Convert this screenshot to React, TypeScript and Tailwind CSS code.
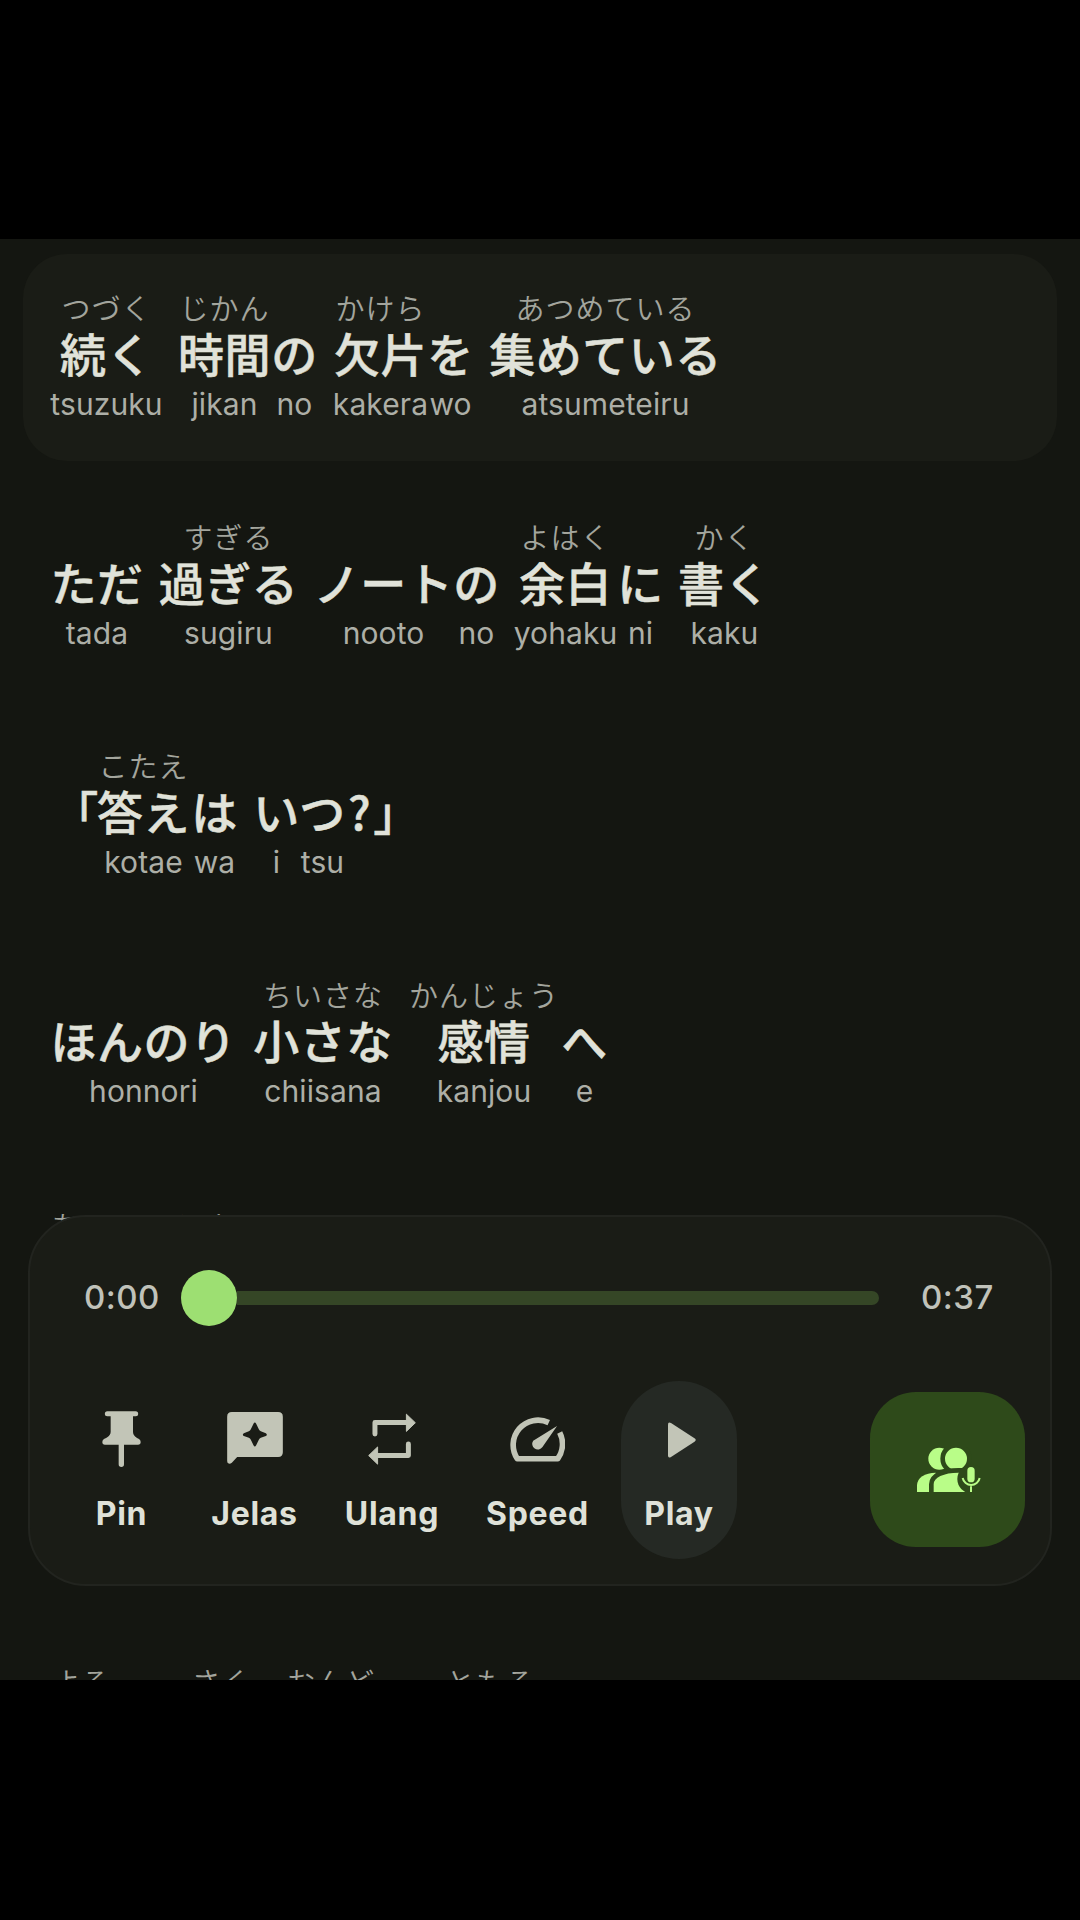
import type { ReactNode } from "react";

type Token = {
  text?: string;
  furigana?: string;
  romaji?: string;
  box: string;
};

type LyricLine = {
  id: number;
  active?: boolean;
  tokens: Token[];
};

const LINES: LyricLine[] = [
  {
    id: 1,
    active: true,
    tokens: [
      { text: "続く", furigana: "つづく", romaji: "tsuzuku", box: "w-[112px]" },
      { text: "時間", furigana: "じかん", romaji: "jikan", box: "ml-4 w-[92px]" },
      { text: "の", romaji: "no", box: "ml-px w-[46px]" },
      { text: "欠片", furigana: "かけら", romaji: "kakera", box: "ml-[17px] w-[92px]" },
      { text: "を", romaji: "wo", box: "ml-px w-[46px]" },
      { text: "集めている", furigana: "あつめている", romaji: "atsumeteiru", box: "ml-[17px] w-[230px]" },
    ],
  },
  {
    id: 2,
    tokens: [
      { text: "ただ", romaji: "tada", box: "w-[93px]" },
      { text: "過ぎる", furigana: "すぎる", romaji: "sugiru", box: "ml-4 w-[138px]" },
      { text: "ノート", romaji: "nooto", box: "ml-[17px] w-[138px]" },
      { text: "の", romaji: "no", box: "ml-px w-[46px]" },
      { text: "余白", furigana: "よはく", romaji: "yohaku", box: "ml-4 w-[100px]" },
      { text: "に", romaji: "ni", box: "ml-0.5 w-[46px]" },
      { text: "書く", furigana: "かく", romaji: "kaku", box: "ml-[15px] w-[92px]" },
    ],
  },
  {
    id: 3,
    tokens: [
      { text: "「", box: "ml-0.5 w-[46px]" },
      { text: "答え", furigana: "こたえ", romaji: "kotae", box: "-ml-px w-[92px]" },
      { text: "は", romaji: "wa", box: "ml-0.5 w-[46px]" },
      { text: "い", romaji: "i", box: "ml-4 w-[46px]" },
      { text: "つ", romaji: "tsu", box: "w-[46px]" },
      { text: "?", box: "w-[28px]" },
      { text: "」", box: "w-[46px]" },
    ],
  },
  {
    id: 4,
    tokens: [
      { text: "ほんのり", romaji: "honnori", box: "w-[186px]" },
      { text: "小さな", furigana: "ちいさな", romaji: "chiisana", box: "ml-[18px] w-[137px]" },
      { text: "感情", furigana: "かんじょう", romaji: "kanjou", box: "ml-[17px] w-[151px]" },
      { text: "へ", romaji: "e", box: "ml-0.5 w-[46px]" },
    ],
  },
  {
    id: 5,
    tokens: [
      { furigana: "あい", box: "mt-0.5 w-[60px]" },
      { furigana: "とき", box: "mt-0.5 ml-[64px] w-[58px]" },
    ],
  },
  { id: 6, tokens: [] },
  {
    id: 7,
    tokens: [
      { furigana: "よる", box: "w-[62px]" },
      { furigana: "さく", box: "ml-[63px] w-[92px]" },
      { furigana: "おんど", box: "ml-[17px] w-[92px]" },
      { furigana: "ともる", box: "ml-[68px] w-[92px]" },
    ],
  },
];

function LyricToken({ token }: { token: Token }) {
  return (
    <div className={`flex shrink-0 flex-col items-center whitespace-nowrap ${token.box}`}>
      <span className="ml-px h-[37px] font-['Noto_Sans_CJK_JP',sans-serif] text-[29px] leading-[37px] font-[350] tracking-[1px] text-[#a3a59d]">
        {token.furigana}
      </span>
      <span className="ml-px h-[53px] font-['Noto_Sans_CJK_JP',sans-serif] text-[46px] leading-[53px] font-medium tracking-[0.5px] text-[#e0e2d9] [-webkit-text-stroke:0.5px_#e0e2d9]">
        {token.text}
      </span>
      <span className="mt-[5px] ml-px h-10 font-[Inter,sans-serif] text-[30px] leading-10 tracking-[0.1px] text-[#adafa7]">
        {token.romaji}
      </span>
    </div>
  );
}

function PinIcon() {
  return (
    <svg width="39" height="56" viewBox="0 0 117 168" fill="currentColor">
      <path d="M16 1H101a7.500 7.500 0 0 1 0 15H93V62C93 74 104 80 111 84Q116 87 116 93Q116 101 108 101H66V160a8 8 0 0 1-16 0V101H9Q1 101 1 93Q1 87 6 84C14 80 26 74 26 62V16H16a7.500 7.500 0 0 1 0-15Z" />
    </svg>
  );
}

function ExplainIcon() {
  return (
    <svg width="56" height="52" viewBox="0 0 167 156" className="mb-0.5" fill="currentColor">
      <path
        fillRule="evenodd"
        d="M14 0H153Q167 0 167 14V121Q167 135 153 135H30L14 152Q8 157 3 154Q0 152 0 146V14Q0 0 14 0ZM79 35Q83 28 87 35L95 52Q97 56 101 58L116 64Q122 68 116 72L101 77Q97 79 95 83L87 100Q83 107 79 100L71 83Q69 79 65 77L50 72Q44 68 50 64L65 58Q69 56 71 52Z"
      />
    </svg>
  );
}

function RepeatIcon() {
  return (
    <svg width="48" height="52" viewBox="0 0 145 156" fill="none" stroke="currentColor">
      <path
        d="M21 63V28H118M122 93V128H28"
        strokeWidth="15"
        strokeLinecap="round"
        strokeLinejoin="round"
      />
      <path
        d="M116 3L143 29L116 55ZM29 102L2 128L29 154Z"
        fill="currentColor"
        strokeWidth="3"
        strokeLinejoin="round"
      />
    </svg>
  );
}

function SpeedIcon() {
  return (
    <svg width="55" height="45" viewBox="0 0 166 134" fill="none" stroke="currentColor">
      <path
        d="M117 16A75 75 0 0 0 22 125H144A75 75 0 0 0 150 46"
        strokeWidth="17"
        strokeLinejoin="round"
      />
      <path d="M142 26L98 90A16.500 16.500 0 1 1 70 71Z" fill="currentColor" stroke="none" />
    </svg>
  );
}

function PlayIcon() {
  return (
    <svg width="28" height="36" viewBox="0 0 28 36" className="mt-0.5 ml-1.5" fill="currentColor">
      <path d="M0 2.500Q0 -.5 3 1L26.500 16.300Q29 18 26.500 19.700L3 35Q0 36.500 0 33.500Z" />
    </svg>
  );
}

function SingersIcon() {
  return (
    <svg width="64" height="46" viewBox="0 0 192 138" className="ml-0.5 fill-[#b9fd88]">
      <circle cx="67" cy="35" r="33" />
      <path d="M0 135V115C0 92 24 77 56 77V135Z" />
      {/* the front singer is cut out of the one behind */}
      <circle cx="117" cy="35" r="40" className="stroke-[#2e4a1a]" strokeWidth="14" />
      <path
        d="M43 142V112C43 85 80 70 124 70H160V142Z"
        className="stroke-[#2e4a1a]"
        strokeWidth="14"
      />
      <circle cx="164" cy="96" r="43" className="fill-[#2e4a1a]" />
      <path d="M152 132L170 138H0V135H152Z" className="fill-[#2e4a1a]" />
      <rect x="151" y="60" width="22" height="46" rx="11" />
      <path
        d="M137 93A26 26 0 0 0 188 93M162 118V135"
        fill="none"
        className="stroke-[#b9fd88]"
        strokeWidth="6"
      />
    </svg>
  );
}

type ControlProps = {
  label: string;
  box: string;
  children: ReactNode;
};

function Control({ label, box, children }: ControlProps) {
  return (
    <button type="button" className={`flex h-[178px] shrink-0 flex-col items-center ${box}`}>
      <span className="mt-7 flex h-[60px] items-center text-[#c2c5b7]">{children}</span>
      <span className="mt-[25px] font-[Inter,sans-serif] text-[32px] leading-10 font-bold tracking-[0.7px] text-[#dfe1d8]">
        {label}
      </span>
    </button>
  );
}

function PlayerPanel() {
  return (
    <div className="absolute top-[976px] left-7 h-[371px] w-[1024px] rounded-[58px] border-2 border-[#22241f] bg-[#1a1c16]">
      <div className="mt-[53px] flex h-14 items-center pl-[54px] font-[Inter,sans-serif] text-[33px] font-medium tracking-[0.5px] text-[#c0c2ba]">
        <span className="w-[97px]">0:00</span>
        <div className="flex h-14 w-[698px] items-center">
          <div className="size-14 rounded-full bg-[#9ddf72]" />
          <div className="h-3.5 flex-1 rounded-r-full bg-[#354626]" />
        </div>
        <span className="ml-[42px]">0:37</span>
      </div>

      <div className="mt-[55px] flex pl-[30px]">
        <Control label="Pin" box="w-[123px]">
          <PinIcon />
        </Control>
        <Control label="Jelas" box="w-[143px]">
          <ExplainIcon />
        </Control>
        <Control label="Ulang" box="w-[132px]">
          <RepeatIcon />
        </Control>
        <Control label="Speed" box="w-[159px]">
          <SpeedIcon />
        </Control>
        <Control label="Play" box="ml-1 w-[116px] rounded-full bg-[#252924]">
          <PlayIcon />
        </Control>
        <button
          type="button"
          aria-label="Karaoke"
          className="mt-[11px] ml-[133px] flex h-[155px] w-[155px] shrink-0 items-center justify-center rounded-[46px] bg-[#2e4a1a]"
        >
          <SingersIcon />
        </button>
      </div>
    </div>
  );
}

export default function App() {
  return (
    <div className="h-[1920px] w-[1080px] overflow-hidden bg-black pt-[239px]">
      <main className="relative h-[1441px] overflow-hidden bg-[#141611]">
        <div className="flex flex-col gap-[22px] px-[23px] pt-[15px]">
          {LINES.map((line) => (
            <div
              key={line.id}
              className={`flex h-[207px] shrink-0 rounded-[44px] px-[27px] pt-[35px] ${
                line.active ? "bg-[#1a1c16]" : ""
              }`}
            >
              {line.tokens.map((token, i) => (
                <LyricToken key={i} token={token} />
              ))}
            </div>
          ))}
        </div>
        <PlayerPanel />
      </main>
    </div>
  );
}
